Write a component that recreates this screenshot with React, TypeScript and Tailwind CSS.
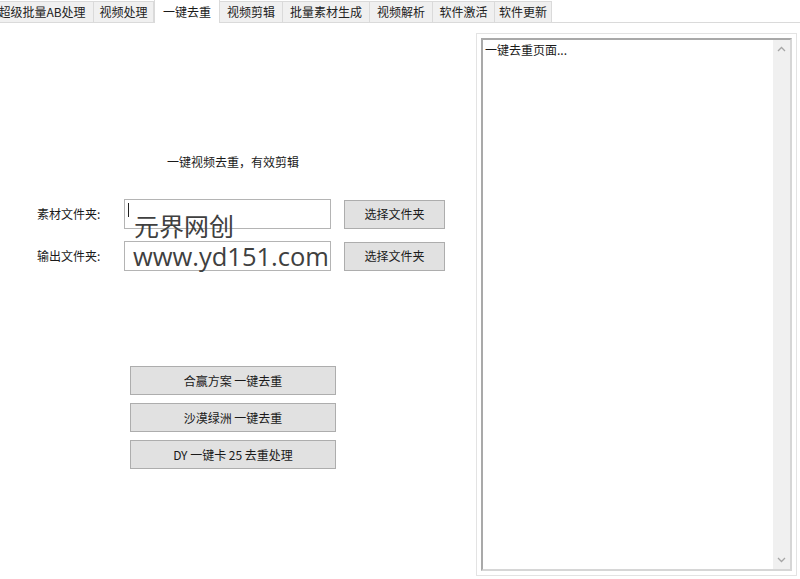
import React from "react";

const tabs = ["超级批量AB处理", "视频处理", "一键去重", "视频剪辑", "批量素材生成", "视频解析", "软件激活", "软件更新"];
const tabWidths = [95, 61, 66, 64, 88, 64, 63, 58];

const font = { fontFamily: '"Noto Sans CJK SC", "Noto Sans", sans-serif' };

function Chevron({ up }: { up?: boolean }) {
  return (
    <svg width="9" height="6" viewBox="0 0 9 6" className="block">
      <path
        d={up ? "M1 5 L4.5 1.5 L8 5" : "M1 1 L4.5 4.5 L8 1"}
        fill="none"
        stroke="#a6a6a6"
        strokeWidth="1.3"
      />
    </svg>
  );
}

function WinButton({ label, className }: { label: string; className: string }) {
  return (
    <button
      className={`flex items-center justify-center bg-[#e1e1e1] border border-[#adadad] text-[12px] text-[#1a1a1a] leading-none ${className}`}
    >
      {label}
    </button>
  );
}

export default function App() {
  return (
    <div className="w-[800px] h-[579px] bg-white relative overflow-hidden text-[#1a1a1a]" style={font}>
      {/* tab strip */}
      <div className="flex h-[23px] items-start border-b border-[#dadada] -ml-[9px]">
        {tabs.map((t, i) => {
          const active = i === 2;
          return (
            <div
              key={t}
              style={{ width: tabWidths[i] + (i === 0 ? 9 : 0) }}
              className={
                active
                  ? "h-[24px] bg-white border border-b-0 border-[#dadada] flex items-center justify-center text-[12px] leading-none relative z-10 -mt-[1px]"
                  : "h-[22px] mt-[1px] bg-[#f0f0f0] border border-[#dadada] -ml-[1px] flex items-center justify-center text-[12px] leading-none text-[#222]"
              }
            >
              {t}
            </div>
          );
        })}
      </div>

      <div className="flex">
        {/* left column */}
        <div className="w-[476px] relative">
          <div className="mt-[131px] text-center text-[12px] leading-[16px] pr-[10px]">一键视频去重，有效剪辑</div>

          <div className="mt-[29px] flex items-center h-[30px]">
            <div className="w-[124px] pl-[37px] text-[12px] leading-none">素材文件夹:</div>
            <div className="w-[207px] h-[30px] border border-[#b4b4b4] relative">
              <div className="absolute left-[3px] top-[3px] w-px h-[14px] bg-[#222]" />
            </div>
            <WinButton label="选择文件夹" className="ml-[13px] w-[101px] h-[29px]" />
          </div>

          <div className="mt-[12px] flex items-center h-[30px]">
            <div className="w-[124px] pl-[37px] text-[12px] leading-none">输出文件夹:</div>
            <div className="w-[207px] h-[30px] border border-[#b4b4b4]" />
            <WinButton label="选择文件夹" className="ml-[13px] w-[101px] h-[29px]" />
          </div>

          {/* watermark overlays */}
          <div
            className="absolute left-[134px] top-[187px] text-[25px] leading-[30px] text-[#404040] pointer-events-none"
            style={{ fontFamily: '"Noto Sans CJK SC", sans-serif' }}
          >
            元界网创
          </div>
          <div
            className="absolute left-[133px] top-[218px] text-[25.5px] leading-[30px] text-[#404040] pointer-events-none"
            style={{ fontFamily: '"Open Sans", "Noto Sans", sans-serif' }}
          >
            www.yd151.com
          </div>

          <div className="mt-[95px] ml-[130px] flex flex-col gap-[8px]">
            <WinButton label="合赢方案 一键去重" className="w-[206px] h-[29px]" />
            <WinButton label="沙漠绿洲 一键去重" className="w-[206px] h-[29px]" />
            <WinButton label="DY 一键卡 25 去重处理" className="w-[206px] h-[29px]" />
          </div>
        </div>

        {/* right log panel */}
        <div className="mt-[10px] w-[321px] h-[543px] border border-[#e3e3e3] p-[4px]">
          <div className="w-full h-full border-2 border-[#a9a9a9] border-r-[#d6d6d6] border-b-[#d6d6d6] flex">
            <div className="flex-1 pl-[2px] pt-[2px] text-[12px] leading-[16px]">一键去重页面...</div>
            <div className="w-[17px] bg-[#f0f0f0] flex flex-col items-center justify-between py-[6px]">
              <Chevron up />
              <Chevron />
            </div>
          </div>
        </div>
      </div>
    </div>
  );
}
